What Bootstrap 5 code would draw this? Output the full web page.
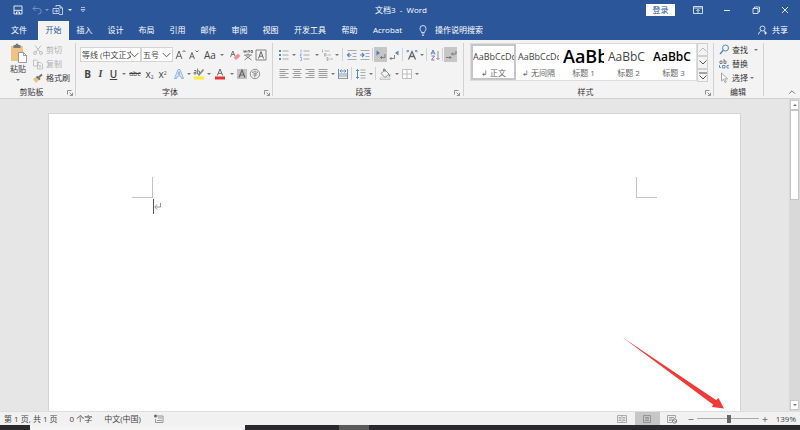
<!DOCTYPE html>
<html lang="zh-CN">
<head>
<meta charset="utf-8">
<meta name="viewport" content="width=device-width, initial-scale=1">
<title>文档3 - Word</title>
<link href="https://cdn.jsdelivr.net/npm/bootstrap@5.3.0/dist/css/bootstrap.min.css" rel="stylesheet">
<style>
:root{--blue:#2b579a;--ink:#444;--line:#d2d2d2}
body{font:8px/12px "Open Sans","Noto Sans CJK SC",sans-serif;color:var(--ink);background:#e6e6e6}
button,input,select{font:inherit;color:inherit}
button{border:0;background:none;padding:0;line-height:12px}
svg{display:block;flex:none;fill:none;stroke:currentColor;overflow:visible}
.ic{width:12px;height:12px}
.topbar{background:var(--blue);color:#fff}
.topbar>div{height:20px}
.topbar .ic{opacity:.85}
.side{flex:1 1 0}
.qat{padding-left:11px}
.dim{opacity:.4}
.topbar .car i{border-top-color:#fff}
.winbtns{gap:16px;padding-right:9px}
.login{background:#fff;color:var(--blue);width:29px;height:12px}
.rtabs a{color:#fff;text-decoration:none;width:31px;height:20px;line-height:20px;text-align:center}
.rtabs a.first-tab{width:38px}
.rtabs a.wide-tab{width:48px}
.rtabs a.mid-tab{width:45px}
.rtabs a.current{background:linear-gradient(var(--blue),var(--blue)) top/100% 1px no-repeat #f3f3f3;color:var(--blue)}
.tell{gap:6px;padding-left:7px}
.ribbon{background:#f3f3f3;border-bottom:1px solid #d0d0d0;height:59px}
.ribbon .ic{opacity:.8}
.grp{padding:3px 6px 0 4px;position:relative}
.grp::after{content:"";position:absolute;right:0;top:3px;bottom:2px;width:1px;background:var(--line)}
.grp.para{padding-right:7px}
.grp.looks{padding-left:6px}
.grp-body{height:43px}
.grp-name{line-height:12px;text-align:center;position:relative;color:#333;padding-right:7px}
.launch{position:absolute;right:-3px;top:4px;color:#777}
.launch svg{width:6px;height:6px}
.trow{height:15px}
.trow+.trow{margin-top:4px}
.aligns{color:#888}
.tb{width:13px;height:15px;display:flex;align-items:center;justify-content:center;flex:none}
.tb.wd{width:16px}
.tb.car{width:7px}
.tb.on{background:#c6c6c6}
.car i,.cr{border:2px solid transparent;border-top-color:#777;border-bottom:0;display:block;width:0;height:0}
.sp{width:3px;flex:none}
.sp1{width:1px}
.vs{width:3px;height:13px;flex:none;background:linear-gradient(var(--line),var(--line)) center/1px 100% no-repeat}
.vs.v5{width:5px}
.pick{height:15px;border:1px solid #d4d4d4;border-radius:0;padding:0 9px 0 1px;appearance:none;color:#444;
 background:#fff url("data:image/svg+xml,%3Csvg xmlns='http://www.w3.org/2000/svg' viewBox='0 0 10 6'%3E%3Cpath d='M1 1l4 4 4-4' fill='none' stroke='%23444'/%3E%3C/svg%3E") right 1px center/9px 6px no-repeat}
.pick.fam{width:61px}
.pick.siz{width:32px}
.g{font-size:10px}
.tiny{font-size:7px}
.idx{font-size:5px}
.serif-i{font-family:"Liberation Serif",serif}
.off{color:#b1b1b1}
.clip{padding-left:9px}
.clip .grp-name{margin-left:-9px}
.cmds{margin-left:5px}
.mini{height:14px;gap:2px;display:flex;align-items:center;color:#333;white-space:nowrap}
.mini.off{color:#b1b1b1}
.gal{border:1px solid #dcdcdc;background:#fff;height:38px}
.sty{width:45px;padding:0 2px;overflow:hidden;text-align:left;white-space:nowrap;color:#333;height:36px}
.sty.sel{outline:2px solid #c6c6c6;outline-offset:-2px}
.sty b,.sty span{display:block;font-weight:400;overflow:hidden}
.sty b{height:22px;line-height:24px;color:#444;font-size:9px}
.sty .h1x{font-size:18px;line-height:22px;color:#000;font-weight:600}
.sty .h2x{font-size:12px}
.sty .h3x{font-size:12px;font-weight:600;color:#000}
.sty span{text-align:center;color:#666}
.galnav button{width:11px;height:13px;border:1px solid #d0d0d0;display:flex;align-items:center;justify-content:center}
.flip{transform:rotate(180deg)}
.work{min-height:0;position:relative}
.paper{background:#fff;border:1px solid #d4d4d4;border-bottom:0;margin:14px 48px 0;padding:63px 83px 0}
.crop-mark{width:21px;height:21px;border:0 solid #c4c4c4;border-bottom-width:1px}
.crop-mark.lm{border-right-width:1px}
.crop-mark.rm{border-left-width:1px}
.typing{margin:1px 0 0 21px;height:15px;border-left:1px solid #555;color:#999}
.vbar{width:11px;background:#d9d9d9;padding:1px}
.vbar button{height:10px;background:#fff;border:1px solid #c9c9c9;display:flex;align-items:center;justify-content:center}
.vbar .grip{height:90px;background:#fff;border:1px solid #c4c4c4}
.pointer{position:absolute;right:75px;bottom:2px;width:104px;height:74px;z-index:2}
.status{background:#f1f1f1;height:14px;border-top:1px solid #dedede;color:#444}
.status .ic{opacity:.8}
.status .words{gap:12px;padding-left:4px}
.views button{width:25px;height:13px;display:flex;align-items:center;justify-content:center}
.views .on{background:#c6c6c6}
.zoomer{gap:3px;padding:0 4px 0 3px}
.zoomer input{appearance:none;width:62px;height:12px;margin:0;background:linear-gradient(#aaa,#aaa) center/100% 1px no-repeat}
.zoomer input::-webkit-slider-thumb{appearance:none;width:4px;height:8px;background:#666;border:0;border-radius:0}
.zoomer output{padding-left:5px}
.zoomer .ic{width:6px;height:6px;color:#666}
.taskbar{background:#2a292b;height:5px;overflow:hidden;color:#fff}
.taskbar .find{width:215px;margin-left:30px;background:#f3f3f3}
.taskbar .app{width:30px;margin-left:94px;background:#5a5a5a}
.taskbar .clock{margin:1px 47px 0 auto}
</style>
</head>
<body class="vh-100 d-flex flex-column overflow-hidden">
<svg width="0" height="0" class="position-absolute" aria-hidden="true"><defs>
<symbol id="chev" viewBox="0 0 8 5"><path d="M.5.5 4 4 7.500.5" stroke-width=".9"/></symbol>
<symbol id="launch" viewBox="0 0 6 6"><path d="M.5 4.500V.5H4.500M2.500 2.500 5.300 5.300M5.500 2.800V5.500H2.800" stroke-width=".8"/></symbol>
<symbol id="al" viewBox="0 0 12 12"><path d="M1.500 1.500h9M1.500 3.500h6M1.500 5.500h9M1.500 7.500h6M1.500 9.500h9"/></symbol>
<symbol id="ac" viewBox="0 0 12 12"><path d="M1.500 1.500h9M3 3.500h6M1.500 5.500h9M3 7.500h6M1.500 9.500h9"/></symbol>
<symbol id="ar" viewBox="0 0 12 12"><path d="M1.500 1.500h9M4.500 3.500h6M1.500 5.500h9M4.500 7.500h6M1.500 9.500h9"/></symbol>
<symbol id="aj" viewBox="0 0 12 12"><path d="M1.500 1.500h9M1.500 3.500h9M1.500 5.500h9M1.500 7.500h9M1.500 9.500h9"/></symbol>
</defs></svg>

<header class="topbar">
 <div class="d-flex align-items-center">
  <div class="qat side d-flex align-items-center">
   <button class="tb" aria-label="保存"><svg class="ic" viewBox="0 0 12 12"><path d="M2 2h8v8H2zM2 6.300h8M4.500 10V8h3v2"/></svg></button>
   <span class="sp"></span><span class="sp"></span>
   <button class="tb dim" aria-label="撤消"><svg class="ic" viewBox="0 0 12 12"><path d="M4.500 2 2 4.500 4.500 7M2 4.500h5.500a2.500 2.500 0 0 1 0 5.500H7"/></svg></button>
   <button class="tb car dim" aria-label="撤消选项"><i></i></button>
   <button class="tb wd" aria-label="新建"><svg class="ic" viewBox="0 0 12 12"><path d="M4 3V1.500h4l2.500 2.500v6.500H7M8 1.500V4h2.500M1 4.500h6v5H1zM2.500 7h3M4 5.800 5.500 7 4 8.300" stroke-width=".8"/></svg></button>
   <button class="tb car" aria-label="新建选项"><i></i></button>
   <span class="sp"></span>
   <button class="tb" aria-label="自定义快速访问工具栏"><svg width="6" height="6" viewBox="0 0 6 6"><path d="M1 .5h4M1 2.500h4L3 4.800z" stroke-width=".6"/></svg></button>
  </div>
  <div>文档3&nbsp; -&nbsp; Word</div>
  <div class="side d-flex align-items-center justify-content-end winbtns">
   <button class="login">登录</button>
   <button class="tb" aria-label="功能区显示选项"><svg class="ic" viewBox="0 0 12 12"><path d="M1.500 2.500h9v7h-9zM1.500 4h9M6 9V5.500M4.300 7 6 5.300 7.700 7" stroke-width=".9"/></svg></button>
   <button class="tb" aria-label="最小化"><svg class="ic" viewBox="0 0 12 12"><path d="M3 6.500h6"/></svg></button>
   <button class="tb" aria-label="还原"><svg class="ic" viewBox="0 0 12 12"><path d="M3 4.500h5v5H3zM4.500 4.500V3h5v5H8" stroke-width=".9"/></svg></button>
   <button class="tb" aria-label="关闭"><svg class="ic" viewBox="0 0 12 12"><path d="m3 3 6 6M9 3 3 9"/></svg></button>
  </div>
 </div>
 <div class="d-flex align-items-center">
  <nav class="rtabs d-flex" aria-label="功能区">
   <a class="first-tab" href="#">文件</a><a class="current" href="#">开始</a><a href="#">插入</a><a href="#">设计</a><a href="#">布局</a><a href="#">引用</a><a href="#">邮件</a><a href="#">审阅</a><a href="#">视图</a><a class="wide-tab" href="#">开发工具</a><a href="#">帮助</a><a class="mid-tab" href="#">Acrobat</a>
  </nav>
  <button class="tell d-flex align-items-center"><svg class="ic" viewBox="0 0 12 12"><path d="M4.500 8.500C4.500 7 3 6.500 3 4.500a3 3 0 0 1 6 0c0 2-1.500 2.500-1.500 4zM4.700 10h2.600M5.200 11.500h1.600" stroke-width=".9"/></svg>操作说明搜索</button>
  <button class="ms-auto me-2 pe-1 d-flex align-items-center gap-1"><svg width="10" height="10" viewBox="0 0 10 10"><circle cx="4.500" cy="3.500" r="2.500" stroke-width=".8"/><path d="M.5 9.500c.3-2 1.500-3.200 2.700-3.700M5.800 5.800l1.400 1M7.500 6.500v3M6 8h3" stroke-width=".8"/></svg>共享</button>
 </div>
</header>

<section class="ribbon d-flex flex-shrink-0">
 <div class="grp clip">
  <div class="grp-body d-flex">
   <button class="d-flex flex-column align-items-center"><svg width="18" height="20" viewBox="0 0 18 20"><path d="M2 3h12v15H2z" fill="#eec384" stroke="none"/><path d="M4.500 2h2a1.500 1.500 0 0 1 3 0h2v3h-7z" fill="#777" stroke="none"/><path d="M9.500 9.500h5l3 3v7h-8z" fill="#fff" stroke="#888" stroke-width=".8"/><path d="M14.500 9.500v3h3" stroke="#888" stroke-width=".8"/></svg><span>粘贴</span><span class="cr mt-1"></span></button>
   <div class="cmds">
    <button class="mini off"><svg class="ic" viewBox="0 0 12 12"><path d="M3 1.500 8 8M9 1.500 4 8"/><circle cx="3" cy="9" r="1.500"/><circle cx="9" cy="9" r="1.500"/></svg>剪切</button>
    <button class="mini off"><svg class="ic" viewBox="0 0 12 12"><path d="M1.500 2h3l1.500 1.500V8H1.500zM5.500 4.500h3L10.500 6v5h-5zM7 7.500h2M7 9h2" stroke-width=".9"/></svg>复制</button>
    <button class="mini"><svg class="ic" viewBox="0 0 12 12"><path d="m1 7 3-2 3 3-3 3z" fill="#e8b560" stroke="none"/><path d="m4.500 4.500 3.500 3M6.500 5.500l3.500-3" stroke="#555" stroke-width="2"/></svg>格式刷</button>
   </div>
  </div>
  <div class="grp-name">剪贴板<button class="launch" aria-label="剪贴板选项"><svg><use href="#launch"/></svg></button></div>
 </div>

 <div class="grp">
  <div class="grp-body pt-1">
   <div class="trow d-flex align-items-center">
    <select class="pick fam" aria-label="字体"><option>等线 (中文正文)</option></select><select class="pick siz" aria-label="字号"><option>五号</option></select>
    <button class="tb" aria-label="增大字号"><svg class="ic" viewBox="0 0 12 12"><path d="m2 10 3-8 3 8M3 7.300h4M8.500 3 10 1.500 11.500 3"/></svg></button>
    <button class="tb" aria-label="减小字号"><svg class="ic" viewBox="0 0 12 12"><path d="m2.500 10 2.500-6.500L7.500 10M3.500 7.800h3M8.500 1.500 10 3l1.500-1.500"/></svg></button>
    <span class="sp"></span><button class="tb wd g">Aa</button><button class="tb car" aria-label="更改大小写"><i></i></button><span class="sp"></span>
    <button class="tb" aria-label="清除格式"><svg class="ic" viewBox="0 0 12 12"><path d="m1.500 8 2.300-6L6 7M2.500 5.500h2.500" stroke-width=".9"/><path d="m4.500 8.500 4.500-4 2.500 2.500-4.500 4z" fill="#e8788c" stroke="none"/></svg></button>
    <button class="tb" aria-label="拼音指南"><svg class="ic" viewBox="0 0 12 12"><path d="m1.500 1.500.8 2 .8-2 .8 2 .8-2M6 3.500v-2h1.500v2M9 1.500h1.500v2H9zM6 4.500v1.500M2 6h8M3.500 6.500 9.500 11M8.500 6.500 2.500 11" stroke-width=".8"/></svg></button>
    <button class="tb" aria-label="字符边框"><svg class="ic" viewBox="0 0 12 12"><path d="M1 1h10v10H1z" stroke-width=".8"/><path d="m3.500 9.500 2.500-7 2.500 7M4.300 7.200h3.400"/></svg></button>
   </div>
   <div class="trow d-flex align-items-center">
    <span class="sp1"></span>
    <button class="tb g fw-bold">B</button><button class="tb g fst-italic fw-semibold serif-i">I</button><button class="tb g fw-semibold text-decoration-underline">U</button><button class="tb car" aria-label="下划线选项"><i></i></button>
    <button class="tb wd tiny text-decoration-line-through">abc</button><button class="tb g"><span>x<sub class="idx">2</sub></span></button><button class="tb g"><span>x<sup class="idx">2</sup></span></button><span class="sp"></span>
    <button class="tb" aria-label="文本效果"><svg class="ic" viewBox="0 0 12 12"><path d="m1.500 10.500 3.500-9h2l3.500 9H8.500L7.700 8H4.300l-.8 2.500zM5 6.300h2L6 3.500z" stroke="#5b8fd6" stroke-width=".8" fill="#e4effb"/></svg></button><button class="tb car" aria-label="文本效果选项"><i></i></button>
    <button class="tb" aria-label="突出显示"><svg class="ic" viewBox="0 0 12 12"><path d="M1 8.500h10v3H1z" fill="#ffeb00" stroke="none"/><path d="M1 2.500h2V6H1V4.500h2M4.500.5V6H6.500V3H4.500" stroke-width=".8"/><path d="m5.500 7.500 5-6" stroke="#666" stroke-width="1.500"/></svg></button><button class="tb car" aria-label="突出显示选项"><i></i></button>
    <button class="tb wd" aria-label="字体颜色"><svg class="ic" viewBox="0 0 12 12"><path d="M1 8.500h10v3H1z" fill="#e80000" stroke="none"/><path d="m3.300 7.500 2.700-6.500 2.700 6.500M4.200 5.300h3.600"/></svg></button><button class="tb car" aria-label="字体颜色选项"><i></i></button>
    <button class="tb" aria-label="字符底纹"><svg class="ic" viewBox="0 0 12 12"><path d="M1 1h10v10H1z" fill="#b5b5b5" stroke="none"/><path d="m3 9.500 3-7.500 3 7.500M4 7h4" stroke-width="1.200"/></svg></button>
    <button class="tb" aria-label="带圈字符"><svg class="ic" viewBox="0 0 12 12"><circle cx="6" cy="6" r="4.700" stroke-width=".7"/><path d="M6 2.500V4M3.500 5V4h5v1M4.500 5.500h3L6 6.500V9H5M3.500 7h5" stroke-width=".6"/></svg></button>
   </div>
  </div>
  <div class="grp-name">字体<button class="launch" aria-label="字体选项"><svg><use href="#launch"/></svg></button></div>
 </div>

 <div class="grp para">
  <div class="grp-body pt-1">
   <div class="trow d-flex align-items-center">
    <button class="tb" aria-label="项目符号"><svg class="ic" viewBox="0 0 12 12"><path d="M1 2h2M1 6h2M1 10h2" stroke="#2b6cc0" stroke-width="2"/><path d="M4.500 2h6M4.500 6h6M4.500 10h6" stroke="#999"/></svg></button><button class="tb car" aria-label="项目符号库"><i></i></button>
    <button class="tb wd" aria-label="编号"><svg class="ic" viewBox="0 0 12 12"><path d="M2 .5v3M1 5h1.500L1 7h1.500M1 8.500h1.500v3H1" stroke="#4f86c8" stroke-width=".7"/><path d="M4.500 2h6M4.500 6h6M4.500 10h6" stroke="#999"/></svg></button><button class="tb car" aria-label="编号库"><i></i></button>
    <button class="tb" aria-label="多级列表"><svg class="ic" viewBox="0 0 12 12"><path d="M1.500.5v3M3.500 4.500h1.500V7H3.500zM6 8.500h1v3H6z" stroke="#888" stroke-width=".7"/><path d="M3.500 2h5M6.500 6H10M8.500 10H12" stroke="#aaa"/></svg></button><button class="tb car" aria-label="列表库"><i></i></button>
    <span class="vs v5"></span>
    <button class="tb" aria-label="减少缩进"><svg class="ic" viewBox="0 0 12 12"><path d="M1.500 1.500h9M6.500 4.500h4M6.500 7.500h4M1.500 10.500h9" stroke="#999"/><path d="M5.500 6h-4M3.500 4 1.500 6l2 2" stroke="#2b6cc0" stroke-width="1.200"/></svg></button>
    <button class="tb" aria-label="增加缩进"><svg class="ic" viewBox="0 0 12 12"><path d="M1.500 1.500h9M6.500 4.500h4M6.500 7.500h4M1.500 10.500h9" stroke="#999"/><path d="M1 6h4M3 4l2 2-2 2" stroke="#2b6cc0" stroke-width="1.200"/></svg></button>
    <span class="vs"></span>
    <button class="tb on" aria-label="从左向右"><svg class="ic" viewBox="0 0 12 12"><path d="M1.500 1.500v5L5 4z" fill="#2b6cc0" stroke="none"/><path d="M10 5v3.500H5.500M7 7 5.500 8.500 7 10" stroke="#666"/></svg></button>
    <button class="tb" aria-label="从右向左"><svg class="ic" viewBox="0 0 12 12"><path d="M10.500 1.500v5L7 4z" fill="#2b6cc0" stroke="none"/><path d="M6.500 6v3.500H2M3.500 8 2 9.500 3.500 11" stroke="#666"/></svg></button>
    <span class="vs v5"></span>
    <button class="tb" aria-label="中文版式"><svg class="ic" viewBox="0 0 12 12"><path d="m2.500 10.500 3.500-8 3.500 8M4 7.500h4" stroke-width="1.300"/><path d="m1 1.500 2 1.500M11 1.500 9 3M1 3.500V1.500h2M9 1.500h2v2" stroke="#2b6cc0" stroke-width=".8"/></svg></button><button class="tb car" aria-label="中文版式选项"><i></i></button>
    <span class="vs"></span>
    <button class="tb" aria-label="排序"><svg class="ic" viewBox="0 0 12 12"><path d="m2 5.500 2-4.500 2 4.500M2.700 4h2.600" stroke="#2b6cc0"/><path d="M2.500 7h3L2.500 11h3" stroke="#7b4fa3"/><path d="M9 2v8.500M7.500 9 9 10.500 10.500 9" stroke="#777"/></svg></button>
    <span class="vs"></span>
    <button class="tb on" aria-label="显示编辑标记"><svg class="ic" viewBox="0 0 12 12"><path d="M11 2v3H6.500M8 3.500 6.500 5 8 6.500M1 8.500h5M4.500 7 6 8.500 4.500 10" stroke="#666"/></svg></button>
   </div>
   <div class="trow aligns d-flex align-items-center">
    <button class="tb" aria-label="左对齐"><svg class="ic"><use href="#al"/></svg></button><button class="tb" aria-label="居中"><svg class="ic"><use href="#ac"/></svg></button><button class="tb" aria-label="右对齐"><svg class="ic"><use href="#ar"/></svg></button><button class="tb" aria-label="两端对齐"><svg class="ic"><use href="#aj"/></svg></button><button class="tb car" aria-label="对齐选项"><i></i></button>
    <button class="tb" aria-label="分散对齐"><svg class="ic" viewBox="0 0 12 12"><path d="M1.500 1v10M10.500 1v10M3 3h6M4.500 1.500 3 3l1.500 1.500M7.500 1.500 9 3 7.500 4.500" stroke="#2b6cc0" stroke-width=".9"/><path d="M2 6h8M2 8h8M2 10.500h8" stroke="#888"/></svg></button>
    <span class="vs v5"></span>
    <button class="tb" aria-label="行距"><svg class="ic" viewBox="0 0 12 12"><path d="M2.500 1.500v9M1 3l1.500-1.500L4 3M1 9l1.500 1.500L4 9" stroke="#2b6cc0"/><path d="M5.500 2h5M5.500 4.500h5M5.500 7.500h5M5.500 10h5" stroke="#999"/></svg></button><button class="tb car" aria-label="行距选项"><i></i></button>
    <span class="vs"></span>
    <button class="tb wd" aria-label="底纹"><svg class="ic" viewBox="0 0 12 12"><path d="m2 5.500 4-3.500 4 4-4 3.500zM4.500 3V1h1.500v3" stroke="#666" stroke-width=".9"/><path d="M10.500 6.500v2" stroke="#2b6cc0" stroke-width="1.500"/><path d="M1 10h10v1.500H1z" stroke="#999" stroke-width=".6" fill="#fff"/></svg></button><button class="tb car" aria-label="底纹选项"><i></i></button>
    <button class="tb" aria-label="边框"><svg class="ic" viewBox="0 0 12 12"><path d="M1.500 1.500h9v9h-9zM6 1.500v9M1.500 6h9" stroke="#aaa" fill="#fff" stroke-width=".9"/></svg></button><button class="tb car" aria-label="边框选项"><i></i></button>
   </div>
  </div>
  <div class="grp-name">段落<button class="launch" aria-label="段落选项"><svg><use href="#launch"/></svg></button></div>
 </div>

 <div class="grp looks">
  <div class="grp-body d-flex">
   <div class="gal d-flex">
    <button class="sty sel"><b>AaBbCcDd</b><span>↲ 正文</span></button>
    <button class="sty"><b>AaBbCcDd</b><span>↲ 无间隔</span></button>
    <button class="sty"><b class="h1x">AaBb</b><span>标题 1</span></button>
    <button class="sty"><b class="h2x">AaBbC</b><span>标题 2</span></button>
    <button class="sty"><b class="h3x">AaBbC</b><span>标题 3</span></button>
   </div>
   <div class="galnav">
    <button aria-label="上一行" class="off"><svg class="flip" width="8" height="5"><use href="#chev"/></svg></button>
    <button aria-label="下一行"><svg width="8" height="5"><use href="#chev"/></svg></button>
    <button aria-label="更多样式"><svg width="8" height="8" viewBox="0 0 8 8"><path d="M0 1h8M.5 3.500 4 7l3.500-3.500" stroke-width=".9"/></svg></button>
   </div>
  </div>
  <div class="grp-name">样式<button class="launch" aria-label="样式选项"><svg><use href="#launch"/></svg></button></div>
 </div>

 <div class="grp">
  <div class="grp-body">
   <button class="mini"><svg class="ic" viewBox="0 0 12 12"><circle cx="7.500" cy="4" r="3" stroke="#2b6cc0"/><path d="M5.300 6.200 2 10" stroke="#2b6cc0" stroke-width="1.300"/></svg>查找<span class="cr ms-1"></span></button>
   <button class="mini"><svg class="ic" viewBox="0 0 12 12"><path d="M2 3h2v2.500H2zM6 1v4.500h2V3H6" stroke="#555" stroke-width=".9"/><path d="M4.500 7.500H7V10H4.500zM11 7.500H9V10h2M1.500 7v2.500H3" stroke="#2b6cc0" stroke-width=".9"/></svg>替换</button>
   <button class="mini"><svg class="ic" viewBox="0 0 12 12"><path d="M3.500 1v8L5.500 7.200 7 10.500l1.300-.6L6.800 6.800H9.500z" stroke="#888" stroke-width=".9" fill="#fff"/></svg>选择<span class="cr"></span></button>
  </div>
  <div class="grp-name pe-0">编辑</div>
 </div>
 <button class="ms-auto me-1 mt-auto mb-1" aria-label="折叠功能区"><svg class="flip" width="8" height="4"><use href="#chev"/></svg></button>
</section>

<main class="work d-flex flex-grow-1">
 <article class="paper flex-grow-1">
  <div class="d-flex justify-content-between"><span class="crop-mark lm"></span><span class="crop-mark rm"></span></div>
  <div class="typing"><svg width="7" height="14" viewBox="0 0 7 14"><path d="M6.500 4v4H1M3 5.500.8 8 3 10.500"/></svg></div>
 </article>
 <div class="vbar d-flex flex-column">
  <button aria-label="向上滚动"><span class="cr flip"></span></button><div class="grip"></div><button class="mt-auto" aria-label="向下滚动"><span class="cr"></span></button>
 </div>
 <svg class="pointer" viewBox="0 0 104 74" aria-hidden="true"><path d="M1 2 95 65 97.500 63 103 73.500 91 72 92 69.500z" fill="#f03a37" stroke="none"/></svg>
</main>

<footer class="flex-shrink-0">
 <div class="status d-flex align-items-center">
  <div class="words d-flex align-items-center"><span>第 1 页, 共 1 页</span><span>0 个字</span><span>中文(中国)</span>
   <button class="tb" aria-label="宏录制"><svg class="ic" viewBox="0 0 12 12"><path d="M4 3h6v6.500H2.500V6M5 5h4M4 7.500h5" stroke="#666" stroke-width=".8"/><circle cx="2.500" cy="3" r="1.500" fill="#444" stroke="none"/></svg></button></div>
  <div class="views ms-auto d-flex">
   <button aria-label="阅读视图"><svg class="ic" viewBox="0 0 12 12"><path d="M1.500 2.500H6v7H1.500zM6 2.500h4.500v7H6M2.500 4.500H5M2.500 6H5M2.500 7.500H5M7 4.500h2.500M7 6h2.500M7 7.500h2.500" stroke="#777" stroke-width=".7"/></svg></button>
   <button class="on" aria-label="页面视图"><svg class="ic" viewBox="0 0 12 12"><path d="M2.500 2.500h7v7h-7zM4 4.500h4M4 6h4M4 7.500h4" stroke="#777" stroke-width=".8"/></svg></button>
   <button aria-label="Web 版式"><svg class="ic" viewBox="0 0 12 12"><path d="M6 9.500H1.500v-7h8V5M3 4.500h5M3 6h3M3 7.500h2.500" stroke="#777" stroke-width=".8"/><circle cx="8.500" cy="8" r="2.200" stroke="#555" stroke-width=".9"/><path d="m7 7 3 2" stroke="#555" stroke-width=".8"/></svg></button>
  </div>
  <div class="zoomer d-flex align-items-center">
   <button aria-label="缩小"><svg class="ic" viewBox="0 0 6 6"><path d="M.5 3.500h5"/></svg></button>
   <input type="range" min="0" max="100" value="53" aria-label="显示比例">
   <button aria-label="放大"><svg class="ic" viewBox="0 0 6 6"><path d="M.5 3.500h5M3 1v5"/></svg></button>
   <output>139%</output>
  </div>
 </div>
 <div class="taskbar d-flex"><span class="find"></span><span class="app"></span><span class="clock">17:46</span></div>
</footer>
<script src="https://cdn.jsdelivr.net/npm/bootstrap@5.3.0/dist/js/bootstrap.bundle.min.js"></script>
</body>
</html>
